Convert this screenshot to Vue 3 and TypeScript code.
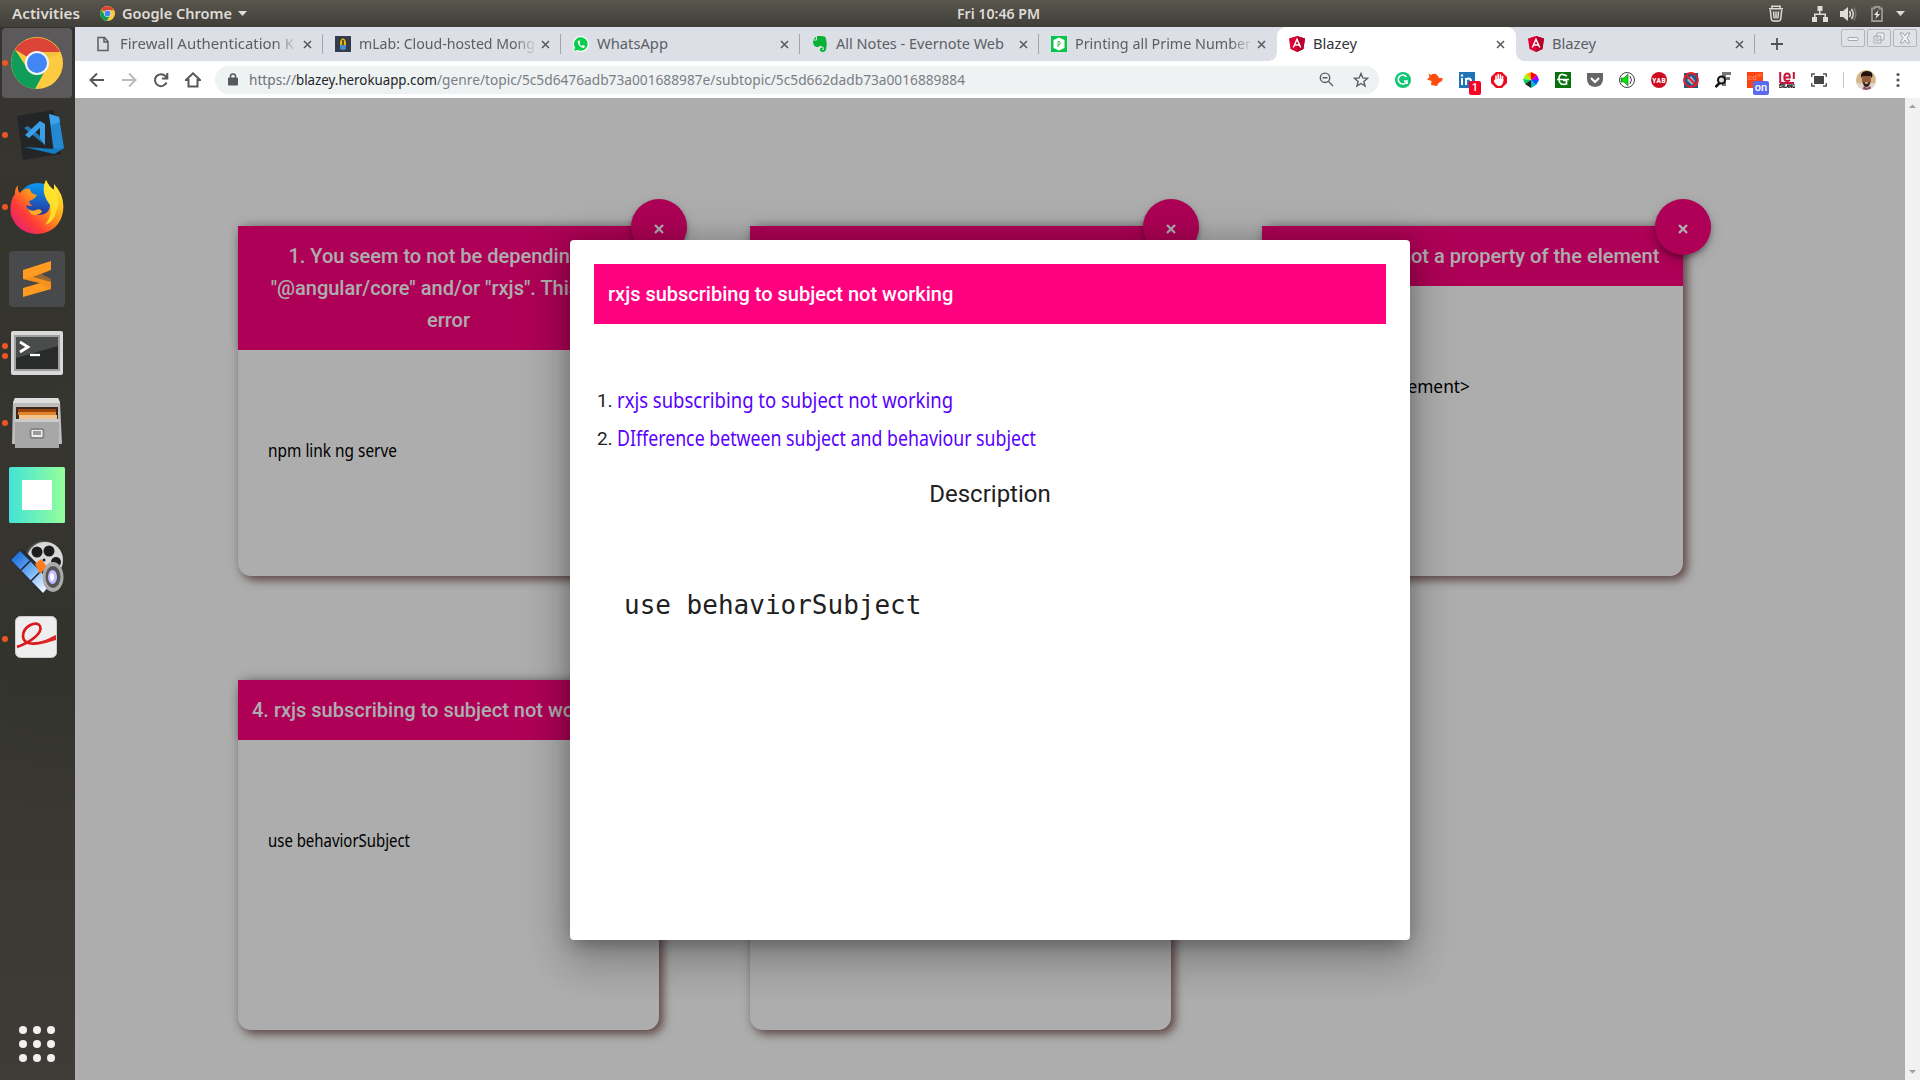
<script setup lang="ts">
import { h, type FunctionalComponent } from 'vue'

interface FitProps { text: string; w: number; size: number; face?: string; weight?: number; hand?: boolean; color?: string }

// Single text line set to a fixed advance width; `hand` straightens an italic into an upright script.
const Fit: FunctionalComponent<FitProps> = (p) => {
  const height = Math.round(p.size * 1.5)
  const base = Math.round(p.size * 1.1)
  return h('svg', { width: p.w, height, style: 'display:block;overflow:visible;flex:none' }, [
    h('text', {
      x: 0, y: 0, textLength: p.w, lengthAdjust: 'spacingAndGlyphs', fill: p.color ?? 'currentColor',
      transform: `translate(0 ${base})${p.hand ? ' skewX(11)' : ''}`,
      stroke: p.hand ? (p.color ?? 'currentColor') : 'none', 'stroke-width': 0.3,
      'font-family': p.face ?? (p.hand ? '"Open Sans", "Noto Sans", sans-serif' : '"Noto Sans", sans-serif'), 'font-size': p.size,
      'font-weight': p.weight ?? 400, 'font-style': p.hand ? 'italic' : 'normal',
    }, p.text),
  ])
}
Fit.props = ['text', 'w', 'size', 'face', 'weight', 'hand', 'color']

interface Tab { title: string; w: number; icon: string; active?: boolean; fade?: boolean; sep?: boolean }
const tabs: Tab[] = [
  { title: 'Firewall Authentication K', w: 174, icon: 'page', fade: true, sep: true },
  { title: 'mLab: Cloud-hosted Mong', w: 176, icon: 'mlab', fade: true, sep: true },
  { title: 'WhatsApp', w: 71, icon: 'whatsapp', sep: true },
  { title: 'All Notes - Evernote Web', w: 168, icon: 'evernote', sep: true },
  { title: 'Printing all Prime Number', w: 176, icon: 'printing', fade: true },
  { title: 'Blazey', w: 44, icon: 'angular', active: true },
  { title: 'Blazey', w: 44, icon: 'angular', sep: true },
]

interface Card { title: string[]; body: string; w: number; start?: boolean }
const cards: Card[] = [
  { title: ['1. You seem to not be depending on', '"@angular/core" and/or "rxjs". This is an', 'error'], body: 'npm link ng serve', w: 129 },
  { title: ['2. rxjs subject'], body: '', w: 0 },
  { title: ['3. Module is not a property of the element'], body: '<HTMLInputElement>', w: 178 },
  { title: ['4. rxjs subscribing to subject not working'], body: 'use behaviorSubject', w: 142, start: true },
  { title: ['5. Behaviour subject'], body: '', w: 0 },
]

const links = [
  { text: 'rxjs subscribing to subject not working', w: 336 },
  { text: 'DIfference between subject and behaviour subject', w: 419 },
]

const dock: { name: string; dots: number }[] = [
  { name: 'chrome', dots: 1 }, { name: 'code', dots: 1 }, { name: 'firefox', dots: 1 },
  { name: 'sublime', dots: 0 }, { name: 'terminal', dots: 2 }, { name: 'files', dots: 1 },
  { name: 'teal', dots: 0 }, { name: 'video', dots: 0 }, { name: 'reader', dots: 1 },
]
const exts = ['grammarly', 'bird', 'linkedin', 'hand', 'wheel', 'gee', 'pocket', 'speaker', 'yab', 'blocked', 'finder', 'cdn', 'selang', 'screen']
</script>

<template>
  <div class="desktop">
    <svg class="defs" width="0" height="0" aria-hidden="true">
      <defs>
        <symbol id="chrome" viewBox="0 0 52 52">
          <circle cx="26" cy="26" r="26" fill="#fdcb3f" />
          <path d="M26 26 4 12.500A26 26 0 0 1 49 15H26z" fill="#db4437" />
          <path d="M4 12.500A26 26 0 0 0 24 52L35 32 26 37 16 31z" fill="#109d59" />
          <path d="M26 15H49.500L46 18 36 21z" fill="#e9b936" opacity=".5" />
          <circle cx="26" cy="26" r="12" fill="#f4f4f4" />
          <circle cx="26" cy="26" r="10" fill="#4285f4" />
        </symbol>
      </defs>
    </svg>

    <header class="topbar">
      <div class="top-left">
        <Fit text="Activities" :w="68" :size="13.5" :weight="600" />
        <svg class="mini-chrome" width="15" height="15"><use href="#chrome" /></svg>
        <Fit text="Google Chrome" :w="110" :size="13.5" :weight="600" />
        <svg class="caret" width="9" height="5"><path d="M0 0h9L4.500 5z" fill="currentColor" /></svg>
      </div>
      <Fit class="clock" text="Fri 10:46 PM" :w="83" :size="13.5" :weight="600" />
      <div class="tray">
        <svg width="16" height="17" viewBox="0 0 16 17" fill="none" stroke="currentColor" stroke-width="1.500"><path d="M1 3.800h14M4 3V1.200h8V3M2.300 5l1 9q.3 2 2 2h5.400q1.700 0 2-2l1-9M5.500 6.500l.7 7M8 6.500v7M10.500 6.500l-.7 7" /></svg>
        <svg class="net" width="16" height="16" viewBox="0 0 16 16" fill="currentColor"><path d="M5.500 0h5v5h-2v2.500H14V11h2v5h-5v-5h1.500V9h-9v2H5v5H0v-5h2V7.500h5V5H5.500z" /></svg>
        <svg class="vol" width="17" height="16" viewBox="0 0 17 16"><path d="M0 5h3l5-4v14l-5-4H0z" fill="currentColor" /><path d="M9.500 5q2 3 0 6M11.500 3q3.500 5 0 10" fill="none" stroke="currentColor" stroke-width="1.500" /><path d="M14 1.500q3.500 6.500 0 13" fill="none" stroke="#78766f" stroke-width="1.500" /></svg>
        <svg class="bat" width="12" height="16" viewBox="0 0 12 16"><path d="M1 2.500h2.500V1h5v1.500H11V15H1z" fill="none" stroke="#999790" stroke-width="1.800" /><path d="M7.500 4 2.800 9H5.500l-1 4L9.200 8H6.500z" fill="#e2dfd9" /></svg>
        <svg class="caret" width="9" height="5"><path d="M0 0h9L4.500 5z" fill="currentColor" /></svg>
      </div>
    </header>

    <div class="main">
      <aside class="dock">
        <div v-for="d in dock" :key="d.name" class="dock-item" :class="[d.name, { current: d.name === 'chrome' }]">
          <span class="dots"><i v-for="n in d.dots" :key="n" /></span>
          <svg v-if="d.name === 'chrome'" width="52" height="52"><use href="#chrome" /></svg>
          <svg v-else-if="d.name === 'code'" width="56" height="56" viewBox="0 0 56 56">
            <path d="M7 8 44 2 51 46 13 52z" fill="#242527" />
            <path d="M39 6 49 9 54 40 44 46z" fill="#2489d2" /><path d="M39 6 49 9 50 14 41 17z" fill="#3aa3ec" />
            <path d="M14 39 45 41 54 40 44 46z" fill="#137bbf" />
            <path d="m14 20 4-2 17 14v5z" fill="#1f78b8" /><path d="m30 13 5 3v21l-5-7V20L19 30l-4-3z" fill="#3c9ee5" />
          </svg>
          <svg v-else-if="d.name === 'firefox'" width="54" height="56" viewBox="0 0 54 56">
            <defs><linearGradient id="fx" x1="1" y1="0" x2="0" y2="1"><stop offset=".1" stop-color="#fff036" /><stop offset=".42" stop-color="#ff9a16" /><stop offset=".68" stop-color="#ff3b38" /><stop offset="1" stop-color="#d9168c" /></linearGradient><linearGradient id="fb" x2="0" y2="1"><stop stop-color="#0a9af4" /><stop offset="1" stop-color="#31157e" /></linearGradient></defs>
            <circle cx="28" cy="25" r="21" fill="url(#fb)" />
            <path d="M8 6Q7 12 10 14Q14 9 20 10Q20 15 27 16Q24 21 19 22Q20 26 23 27Q18 27 16 26Q18 36 28 36Q40 36 40 25Q30 13 36 1Q39 8 44 11V5Q57 19 52 37Q46 54 27 55Q7 54 1 36Q-1 22 5 15Q4 10 8 6z" fill="url(#fx)" />
            <path d="M36 1Q39 8 44 11Q52 21 46 33Q44 43 35 46Q43 36 40 26Q30 13 36 1z" fill="#ffe62e" opacity=".85" />
            <path d="M17 29Q21 33 26 31Q31 29 32 33Q27 38 21 35z" fill="#ffac25" />
          </svg>
          <svg v-else-if="d.name === 'sublime'" width="56" height="56" viewBox="0 0 56 56">
            <rect width="56" height="56" rx="4" fill="#48494a" /><path d="M14 19 42 10V19L24 26 42 31V38L14 46V37L31 32 14 28z" fill="#ff9b20" /><path d="M14 28 32 23 42 28V31L42 38 30 32z" fill="#e9871a" opacity=".5" />
          </svg>
          <svg v-else-if="d.name === 'terminal'" width="52" height="44" viewBox="0 0 52 44">
            <rect width="52" height="44" rx="2" fill="#d9d9d9" /><rect x="3" y="4" width="46" height="36" fill="#9f9f9f" /><rect x="5" y="6" width="42" height="32" fill="#292b2b" /><path d="M5 6h42v9L5 27z" fill="#4a4c4c" /><path d="m9 11 8 5-8 5" fill="none" stroke="#fff" stroke-width="2.700" /><path d="M19 24h10" stroke="#fff" stroke-width="2.300" />
          </svg>
          <svg v-else-if="d.name === 'files'" width="50" height="52" viewBox="0 0 50 52">
            <path d="M3 1h43l2 4 2 42H0L1 5z" fill="#bdbdbd" /><path d="M3 1h43l2 5H1z" fill="#ddd" /><path d="M4 10h42v14H4z" fill="#39281d" /><path d="M6 12h38v3H6z" fill="#9c420c" /><path d="M6 15h38v3H6z" fill="#e0852e" /><path d="M7 18h38v5H7z" fill="#f2c48b" /><path d="M3 22h44v29H3z" fill="#a7a7a7" /><path d="M3 22h44v3H3z" fill="#ccc" /><rect x="18.500" y="32" width="13" height="9" rx="2" fill="#eee" stroke="#888" stroke-width="2" /><rect x="21" y="34" width="8" height="4" fill="#999" />
          </svg>
          <svg v-else-if="d.name === 'teal'" width="56" height="56" viewBox="0 0 56 56">
            <defs><linearGradient id="tg"><stop stop-color="#42e3d5" /><stop offset="1" stop-color="#94ff9b" /></linearGradient></defs>
            <rect width="56" height="56" rx="1.500" fill="url(#tg)" /><path d="M13 13h30v30H13z" fill="#fff" />
          </svg>
          <svg v-else-if="d.name === 'video'" width="54" height="54" viewBox="0 0 54 54">
            <defs><linearGradient id="film" x2="1" y2="1"><stop offset=".1" stop-color="#1f6fdc" /><stop offset=".5" stop-color="#74b4f5" /><stop offset=".85" stop-color="#e8f1ff" /></linearGradient></defs>
            <circle cx="34" cy="20" r="19" fill="#565656" /><circle cx="35" cy="20" r="18" fill="#d8d8d8" />
            <g fill="#1d1d1d"><circle cx="27" cy="12" r="5.500" /><circle cx="39" cy="11" r="5.500" /><circle cx="46" cy="22" r="5" /><circle cx="34" cy="20" r="1.500" /></g>
            <path d="M12 8 45 42 32 54 0 20z" fill="#252c36" /><path d="M10 11 42 43 33 53 1 20z" fill="url(#film)" /><path d="M20 21 11 30M30 32 21 41" stroke="#1b2330" stroke-width="1.500" /><path d="m31 19 6 8-7 7-5-10z" fill="#ff7a1b" />
            <ellipse cx="43" cy="37" rx="10.500" ry="15" fill="#aaa" /><ellipse cx="43" cy="37" rx="7.500" ry="11" fill="#555" /><ellipse cx="42.500" cy="37" rx="4.500" ry="7" fill="#bfb9ff" /><ellipse cx="42" cy="37" rx="2" ry="4" fill="#fff" />
          </svg>
          <svg v-else width="42" height="42" viewBox="0 0 42 42">
            <rect x=".5" y=".5" width="41" height="41" rx="5" fill="#eee" stroke="#ccc" /><path d="M2 31C16 26 28 17 25 10C22 4 8 10 8 20C8 31 26 29 40 21" fill="none" stroke="#d9191d" stroke-width="2.600" /><path d="M23 28 41 19v5Q33 27 23 28z" fill="#e02528" />
          </svg>
        </div>
        <div class="grid"><i v-for="n in 9" :key="n" /></div>
      </aside>

      <section class="browser">
        <div class="tabs">
          <div v-for="(t, i) in tabs" :key="i" class="tab" :class="{ active: t.active, sep: t.sep }">
            <svg class="fav" width="16" height="16" viewBox="0 0 16 16">
              <path v-if="t.icon === 'page'" d="M2 1.500h6.500L12 5.500v9H2zM8 1.500V6h4" fill="none" stroke="#5c5e63" stroke-width="1.500" />
              <g v-else-if="t.icon === 'mlab'"><path d="M0 0h16v16H0z" fill="#333c4d" /><path d="M5 9V5.500Q8-1 11 5.500V9z" fill="#e8b607" /><path d="M7 4h2v5H7z" fill="#695210" /><path d="M5 9h6v4q-3 2-6 0z" fill="#4a8dcc" /></g>
              <g v-else-if="t.icon === 'whatsapp'"><path d="M0 16 1 12A8 8 0 1 1 4 15z" fill="#fff" /><path d="M1 15l1-3.500a6.800 6.800 0 1 1 2.500 2.400z" fill="#08ce4b" /><path d="M5.500 4.500Q4 5 5 7.500 7 11.500 10.500 12 12 11.500 12 10L10 9 9 10Q7 9 6.500 7.500L7.300 6.500 6.500 4.500z" fill="#fff" /></g>
              <path v-else-if="t.icon === 'evernote'" d="M5 0h4q5 0 5 3 1.500 5 .2 10Q13.500 16 10.500 16 8 16 8 13.500 8 11.500 11 11.500V13q-1.500 0-1 1 2 .6 2-1.800 0-1.700-2-1.700L8 9.500Q7 11.500 4.500 11 .8 10 1 4.500H4Q5 4.500 5 3.500zM1.300 3.500 4 .7v2.800z" fill="#06b334" />
              <g v-else-if="t.icon === 'printing'"><path d="M0 0h16v16H0z" fill="#08c44a" /><path d="M8 1.500 13.500 4v8L8 14.500 2.500 12V4z" fill="#fff" /><path d="M7 11V5.500h1.500q1.500 1.300 0 3.300H7" fill="none" stroke="#35bd55" /></g>
              <g v-else><path d="M8 0 16 2.500 14.500 13 8 16 1.500 13 0 2.500z" fill="#dd0031" /><path d="M8 0 16 2.500 14.500 13 8 16z" fill="#b5002b" /><path d="M4.300 11.500 8 3.300 11.700 11.500M5.800 9h4.400" fill="none" stroke="#fff" stroke-width="1.500" /></g>
            </svg>
            <div class="title" :class="{ fade: t.fade }"><Fit :text="t.title" :w="t.w" :size="14.5" /></div>
            <svg class="close" width="9" height="9" viewBox="0 0 9 9"><path d="m1 1 7 7M8 1 1 8" stroke="#55585d" stroke-width="1.500" /></svg>
          </div>
          <svg class="plus" width="12" height="12"><path d="M6 0v12M0 6h12" stroke="#505358" stroke-width="1.800" /></svg>
          <div class="winbtns">
            <span><svg width="12" height="12" viewBox="0 0 12 12"><rect x="1" y="5.500" width="10" height="3" rx="1" /></svg></span>
            <span><svg width="12" height="12" viewBox="0 0 12 12"><path d="M4 1h7v7H8v3H1V4h3zM4 4v4h4V4z" /><path d="M3 6v3h3" /></svg></span>
            <span><svg width="12" height="12" viewBox="0 0 12 12"><path d="M1 1h3l2 3 2-3h3L8 6l3 5H8L6 8l-2 3H1l3-5z" /></svg></span>
          </div>
        </div>

        <div class="toolbar">
          <div class="nav">
            <svg width="16" height="16" viewBox="0 0 16 16"><path d="M15 8H2M8 1.500 1.500 8 8 14.500" /></svg>
            <svg class="dim" width="16" height="16" viewBox="0 0 16 16"><path d="M1 8h13M8 1.500 14.500 8 8 14.500" /></svg>
            <svg width="16" height="16" viewBox="0 0 16 16"><path d="M13.500 10.500A6 6 0 1 1 12.500 4.200L14 6M14.300 1v5.500H9" /></svg>
            <svg width="16" height="16" viewBox="0 0 16 16"><path d="M1 8 8 1.300 15 8H12.500V14.500h-9V8z" /></svg>
          </div>
          <div class="omnibox">
            <svg class="lock" width="10" height="13" viewBox="0 0 10 13"><path d="M.5 5h9v7h-9z" fill="#565a60" stroke="#565a60" /><path d="M2.500 5V3.300q0-2.300 2.500-2.300t2.500 2.300V5" fill="none" stroke="#565a60" stroke-width="1.500" /></svg>
            <div class="url">
              <Fit text="https://" :w="47" :size="14.3" color="#6c7075" />
              <Fit text="blazey.herokuapp.com" :w="141" :size="14.3" color="#222528" />
              <Fit text="/genre/topic/5c5d6476adb73a001688987e/subtopic/5c5d662dadb73a0016889884" :w="528" :size="14.3" color="#7a7e83" />
            </div>
            <svg class="mag" width="15" height="15" viewBox="0 0 15 15"><path d="M9.500 9.500 14 14M3.500 5.700h5" /><circle cx="6" cy="5.800" r="4.700" /></svg>
            <svg class="star" width="16" height="16" viewBox="0 0 16 16"><path d="m8 1.500 1.800 4.400 4.700.4-3.600 3.100 1.100 4.600-4-2.500L4 14l1.100-4.600L1.500 6.300l4.700-.4z" /></svg>
          </div>
          <div class="exts">
            <span v-for="e in exts" :key="e" class="ext">
              <svg width="16" height="16" viewBox="0 0 16 16">
                <g v-if="e === 'grammarly'"><circle cx="8" cy="8" r="8" fill="#12c575" /><path d="M11.500 5A4.500 4.500 0 1 0 12 9H9M12 9v3" fill="none" stroke="#fff" stroke-width="1.600" /></g>
                <path v-else-if="e === 'bird'" d="M1.500 1.500 4 3Q8 0 11 4l1 2h3.500q.5 3-2.500 4-2 1-3 4L4 13l.5-4L0 7.500 2.500 5z" fill="#ff4d10" />
                <g v-else-if="e === 'linkedin'"><path d="M0 0h16v16H0z" fill="#1f73b7" /><path d="M3 6v7M7 13V6M7 9q0-2.500 2.500-2.500T12 9v4" fill="none" stroke="#fff" stroke-width="2" /><circle cx="3" cy="3.500" r="1.200" fill="#fff" /></g>
                <g v-else-if="e === 'hand'"><path d="M5 0h6l5 5v6l-5 5H5l-5-5V5z" fill="#e80d1e" /><path d="M5 8V4M7.200 8V2.500M9.400 8V3M11.500 9V4.500" stroke="#fff" stroke-width="1.600" stroke-linecap="round" /><path d="M4.200 7h8v3q-1 4-4 4-3 0-5.500-5z" fill="#fff" /></g>
                <g v-else-if="e === 'wheel'"><path d="M8 8V0L3 2z" fill="#fa0" /><path d="M8 8 3 2 0 7z" fill="#9f0" /><path d="M8 8 0 7 2 12z" fill="#0c6" /><path d="M8 8 2 12 8 16z" fill="#222" /><path d="M8 8V16L13 13z" fill="#0bb" /><path d="M8 8 13 13 16 8z" fill="#05f" /><path d="M8 8 16 8 14 3z" fill="#a0f" /><path d="M8 8 14 3 8 0z" fill="#f00" /></g>
                <g v-else-if="e === 'gee'"><path d="M0 0h16v16H0z" fill="#07710b" /><path d="M12 4Q4-.5 4 7q0 7 7.500 5V8.500H8M2 7.500h12" fill="none" stroke="#fff" stroke-width="1.700" /></g>
                <g v-else-if="e === 'pocket'"><path d="M0 1h16v6q0 7-8 8-8-1-8-8z" fill="#666" /><path d="m4 6 4 4 4-4" fill="none" stroke="#fff" stroke-width="2.200" /></g>
                <g v-else-if="e === 'speaker'"><circle cx="8" cy="8" r="7.500" fill="#fff" stroke="#444" /><path d="M2 6h3l4-4v12l-4-4H2z" fill="#06e406" stroke="#186018" stroke-width=".6" /><path d="M11 4q3 4 0 8" fill="none" stroke="#444" /></g>
                <g v-else-if="e === 'yab'"><circle cx="8" cy="8" r="8" fill="#cf0b22" /><text x="1.300" y="10.500" font-family="Roboto, sans-serif" font-weight="900" font-size="6.500" fill="#fff" textLength="13.500">YAB</text></g>
                <g v-else-if="e === 'blocked'"><path d="M1 1h14v15H1z" fill="#225786" /><path d="M4 8 8 4l4 5-3 4z" fill="#9bc" /><circle cx="8" cy="8" r="7" fill="none" stroke="#ed1d27" stroke-width="1.900" /><path d="m3 3 10 10" stroke="#ed1d27" stroke-width="2" /></g>
                <g v-else-if="e === 'finder'"><path d="M7 0h9v3h-5v2h4v3h-4v6H7z" fill="#777" /><circle cx="6.500" cy="8" r="3.500" fill="#ddd" stroke="#111" stroke-width="2" /><path d="m4.500 11-4 4" stroke="#111" stroke-width="2.500" /></g>
                <g v-else-if="e === 'cdn'"><path d="M0 0h16v16H0z" fill="#ff4310" /><text x="1" y="8" font-family="Roboto, sans-serif" font-size="8" fill="#ff9a70">cd</text><text x="10.500" y="5" font-family="Roboto, sans-serif" font-size="5" fill="#ff9a70">m</text></g>
                <g v-else-if="e === 'selang'"><path d="M1.200 0v11M14.800 0v7M1 11h14" fill="none" stroke="#c8143a" stroke-width="2" /><path d="M5.500 5.500h5.300Q11 1.500 8.300 1.500 5.300 1.500 5.300 5.500q0 3.500 3 3.500 1.700 0 2.700-1.200" fill="none" stroke="#c8143a" stroke-width="2" /><text x="0" y="16" font-family="Roboto, sans-serif" font-weight="900" font-size="4.500" textLength="16">ERLANG</text></g>
                <g v-else><path d="M3 4h10v8H3z" fill="#444" /><path d="M.7 5V2H4M12 2h3.300v3M15.300 11v3H12M4 14H.7v-3" fill="none" stroke="#555" stroke-width="1.400" /></g>
              </svg>
              <b v-if="e === 'linkedin'" class="badge red">1</b>
              <b v-if="e === 'cdn'" class="badge blue">on</b>
            </span>
          </div>
          <span class="rule" />
          <svg class="avatar" width="20" height="20" viewBox="0 0 20 20"><defs><clipPath id="av"><circle cx="10" cy="10" r="10" /></clipPath></defs><g clip-path="url(#av)"><path d="M0 0h20v20H0z" fill="#d6b787" /><path d="M0 13h20v7H0z" fill="#ddd6cf" /><ellipse cx="10.500" cy="10" rx="4.500" ry="6.500" fill="#91583a" /><path d="M5 8Q4 1 11 1t5 7l-2-2H7z" fill="#20130f" /><path d="M7 12q4 2 7 0-.5 5-3.500 5T7 12z" fill="#392018" /><path d="M9 13h3" stroke="#fff" /><path d="m6 20 2-4 3 2 3-2 2 4z" fill="#8b5362" /></g></svg>
          <svg class="kebab" width="4" height="16" fill="#54575c"><circle cx="2" cy="2.500" r="1.600" /><circle cx="2" cy="8" r="1.600" /><circle cx="2" cy="13.500" r="1.600" /></svg>
        </div>

        <div class="viewport">
          <div class="page">
            <article v-for="(c, i) in cards" :key="i" class="card">
              <h2 class="head" :class="{ start: c.start }"><span v-for="l in c.title" :key="l">{{ l }}</span></h2>
              <div v-if="c.body" class="note"><Fit :text="c.body" :w="c.w" :size="18" hand /></div>
              <button class="fab"><svg width="10" height="10" viewBox="0 0 10 10"><path d="m1 1 8 8M9 1 1 9" stroke="#fff" stroke-width="2.400" /></svg></button>
            </article>
          </div>
          <div class="backdrop">
            <div class="dialog">
              <h1 class="dialog-head">rxjs subscribing to subject not working</h1>
              <ol>
                <li v-for="(l, i) in links" :key="l.text"><span class="num">{{ i + 1 }}.</span><Fit :text="l.text" :w="l.w" :size="22" hand color="#5900ff" /></li>
              </ol>
              <h3>Description</h3>
              <pre>use behaviorSubject</pre>
            </div>
          </div>
          <div class="scroll">
            <svg width="15" height="15"><path d="M4 10h7L7.500 6.500z" fill="#a0a0a0" /></svg>
            <svg width="15" height="15"><path d="M4 5h7L7.500 8.500z" fill="#a0a0a0" /></svg>
          </div>
        </div>
      </section>
    </div>
  </div>
</template>

<style>
body { margin: 0; overflow: hidden; }
</style>

<style scoped>
* { box-sizing: border-box; }
.desktop { width: 1920px; height: 1080px; overflow: hidden; display: flex; flex-direction: column; font-family: Roboto, "Noto Sans", sans-serif; }
.defs { position: absolute; }
.topbar { height: 27px; flex: none; background: linear-gradient(#59564e, #403e39); color: #dfdbd5; display: grid; grid-template-columns: 957px 83px 1fr; align-items: center; }
.top-left { display: flex; align-items: center; padding-left: 12px; }
.mini-chrome { margin: 0 7px 0 20px; }
.top-left .caret { margin-left: 6px; }
.tray { display: flex; align-items: center; justify-content: flex-end; padding-right: 15px; }
.net { margin-left: 28px; }
.vol { margin-left: 12px; }
.bat { margin-left: 14px; }
.tray .caret { margin-left: 13px; }
.main { flex: 1; display: flex; min-height: 0; }
.dock { width: 75px; flex: none; display: flex; flex-direction: column; background: radial-gradient(circle at 20% 25%, #34342d, transparent 30%), radial-gradient(circle at 70% 60%, #32332c, transparent 25%), linear-gradient(#363431, #373530 60%, #3f3c38); }
.dock-item { height: 72px; display: flex; align-items: center; justify-content: center; position: relative; padding-right: 1px; }
.dock-item.current { margin: 1px 3px 1px 2px; height: 70px; background: #5b5959; border-radius: 4px; padding: 0; }
.dock-item.code { padding: 2px 0 0 1px; }
.dock-item.terminal { padding-top: 4px; }
.dock-item.reader { padding: 0 3px 4px 0; }
.dots { position: absolute; left: 2px; top: 0; height: 72px; display: flex; flex-direction: column; justify-content: center; gap: 4px; }
.current .dots { left: 0; top: -1px; }
.dots i { width: 6px; height: 6px; border-radius: 50%; background: #ed5524; }
.grid { margin: auto auto 18px 19px; display: grid; grid-template-columns: repeat(3, 8px); gap: 6px; }
.grid i { width: 8px; height: 8px; border-radius: 50%; background: #f2f1ef; }
.browser { flex: 1; display: flex; flex-direction: column; min-width: 0; }
.tabs { height: 34px; flex: none; background: #dcdfe6; display: flex; align-items: center; padding-left: 9px; color: #5b5e63; }
.tab { width: 238.700px; flex: none; height: 34px; display: flex; align-items: center; padding: 0 11px 0 12px; position: relative; }
.tab.sep::after { content: ""; position: absolute; right: 0; top: 7px; width: 1px; height: 20px; background: #a1a4aa; }
.tab.active { background: #fff; border-radius: 9px 9px 0 0; color: #303338; }
.tab.active::before, .tab.active::after { content: ""; position: absolute; bottom: 0; width: 8px; height: 8px; }
.tab.active::before { left: -8px; background: radial-gradient(circle at 0 0, transparent 7.500px, #fff 8px); }
.tab.active::after { right: -8px; background: radial-gradient(circle at 100% 0, transparent 7.500px, #fff 8px); }
.fav { flex: none; }
.title { margin-left: 8px; width: 176px; flex: none; }
.title.fade { -webkit-mask-image: linear-gradient(90deg, #000 155px, transparent 178px); mask-image: linear-gradient(90deg, #000 155px, transparent 178px); }
.close { margin-left: auto; flex: none; }
.plus { margin-left: 16px; }
.winbtns { display: flex; gap: 2px; margin: 0 3px 12px auto; }
.winbtns span { width: 24px; height: 18px; border: 1px solid #b4b6bc; border-radius: 2px; display: flex; align-items: center; justify-content: center; background: #e0e2e8; }
.winbtns svg { fill: #f2f3f5; stroke: #a5a7ad; stroke-width: 1; }
.toolbar { height: 37px; flex: none; background: #fff; display: flex; align-items: center; }
.nav { display: flex; gap: 16px; padding-left: 14px; width: 140px; flex: none; }
.nav svg { fill: none; stroke: #55585d; stroke-width: 2; flex: none; }
.nav .dim { stroke: #b9bbbe; }
.omnibox { width: 1164px; height: 28px; flex: none; border-radius: 14px; background: #eef2f3; display: flex; align-items: center; padding: 0 10px 0 13px; }
.url { display: flex; margin-left: 11px; flex: 1; }
.mag, .star { fill: none; stroke: #5a5d62; stroke-width: 1.400; }
.star { margin-left: 19px; }
.exts { display: flex; gap: 16px; padding-left: 16px; }
.ext { position: relative; width: 16px; height: 16px; }
.ext svg { display: block; }
.badge { position: absolute; top: 9px; left: 10px; height: 14px; font: 500 11px/14px Roboto, sans-serif; color: #fff; border-radius: 2px; text-align: center; }
.red { width: 12px; background: #fb0025; }
.blue { width: 16px; left: 6px; background: #5a6bf0; }
.rule { width: 1px; height: 16px; background: #c5c7ca; margin: 0 12px 0 16px; }
.kebab { margin-left: 20px; }
.viewport { flex: 1; display: flex; position: relative; background: #fff; overflow: hidden; }
.page { flex: 1; display: grid; grid-template-columns: repeat(3, 421px); grid-auto-rows: 350px; column-gap: 91px; row-gap: 104px; padding: 128px 0 0 163px; }
.card { position: relative; border-radius: 13px; background: #fff; box-shadow: 4px 4px 10px rgba(110, 60, 60, .75), 0 0 12px rgba(0, 0, 0, .12); display: flex; flex-direction: column; }
.head { margin: 0; padding: 14px; background: #ff007f; color: #fff; font: 500 20px/32px Roboto, sans-serif; text-align: center; box-shadow: 0 -2px 10px rgba(0, 0, 0, .12); clip-path: inset(-20px 0 0 -20px); }
.head.start { text-align: left; }
.head span { display: block; white-space: nowrap; }
.note { padding: 87px 0 0 30px; color: #000; }
.fab { position: absolute; right: -28px; top: -27px; width: 56px; height: 56px; border: 0; border-radius: 50%; background: #ff007f; box-shadow: 0 3px 5px rgba(0, 0, 0, .3), 0 5px 14px rgba(0, 0, 0, .16); display: flex; align-items: center; justify-content: center; padding: 3px 0 0; }
.backdrop { position: absolute; inset: 0 15px 0 0; background: rgba(0, 0, 0, .32); display: flex; justify-content: center; align-items: center; }
.dialog { width: 840px; height: 700px; background: #fff; border-radius: 4px; padding: 24px; margin-top: 2px; box-shadow: 0 11px 15px -7px rgba(0, 0, 0, .2), 0 24px 38px 3px rgba(0, 0, 0, .14), 0 9px 46px 8px rgba(0, 0, 0, .12), 0 0 22px rgba(0, 0, 0, .16); color: #212121; }
.dialog-head { margin: 0; height: 60px; padding: 14px; background: #ff007f; color: #fff; font: 500 20px/32px Roboto, sans-serif; }
ol { list-style: none; margin: 57px 0 0; padding: 0; }
li { height: 38px; display: flex; align-items: center; }
.num { width: 20px; margin-left: 3px; font-size: 19px; letter-spacing: -.3px; }
h3 { margin: 21px 0 0; font: 400 24px/32px Roboto, sans-serif; text-align: center; }
pre { margin: 79px 0 0 30px; font: 26px/32px "DejaVu Sans Mono", monospace; }
.scroll { width: 15px; flex: none; background: #f1f1f1; display: flex; flex-direction: column; justify-content: space-between; }
</style>
